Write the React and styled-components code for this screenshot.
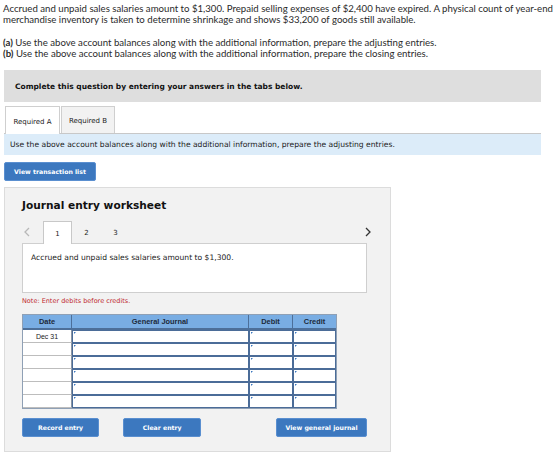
import React from "react";
import styled, { createGlobalStyle } from "styled-components";

const Global = createGlobalStyle`
  html, body { margin: 0; padding: 0; background: #fff; }
  body { font-family: "Lato", "Liberation Sans", sans-serif; color: #222; }
  * { box-sizing: border-box; }
`;

const Page = styled.div`
  width: 541px;
  padding: 3px 0 0 4px;
`;

const Intro = styled.p`
  margin: 0 0 12px -1px;
  width: 560px;
  font-family: "Lato", "Liberation Sans", sans-serif;
  font-size: 9.65px;
  line-height: 11px;
  color: #2a2a2a;
`;

const Parts = styled.div`
  font-family: "Lato", "Liberation Sans", sans-serif;
  font-size: 9.65px;
  line-height: 10.6px;
  margin-left: -1px;
  margin-bottom: 12px;
  color: #2a2a2a;
  & b { font-weight: 700; }
`;

const Banner = styled.div`
  height: 32px;
  background: #dedede;
  display: flex;
  align-items: center;
  padding-left: 11px;
  font-family: "DejaVu Sans", Verdana, sans-serif;
  font-weight: 700;
  font-size: 7.5px;
  color: #111;
  margin-bottom: 4px;
`;

const TabRow = styled.div`
  display: flex;
  height: 28px;
  padding-left: 1px;
  border-bottom: 1px solid #c8c8c8;
`;

const Tab = styled.div`
  width: ${(p) => p.$w}px;
  display: flex;
  align-items: center;
  justify-content: center;
  border: 1px solid #cfcfcf;
  border-bottom: none;
  margin-right: 1px;
  background: ${(p) => (p.$active ? "#fff" : "#f2f2f2")};
  margin-bottom: ${(p) => (p.$active ? "-1px" : "0")};
  padding-top: 2px;
  font-family: "DejaVu Sans", Verdana, sans-serif;
  font-size: 7px;
  color: #222;
`;

const Info = styled.div`
  height: 21px;
  background: #dcecf9;
  display: flex;
  align-items: center;
  padding-left: 6px;
  font-family: "DejaVu Sans", Verdana, sans-serif;
  font-size: 7.6px;
  color: #222;
  margin-bottom: 7px;
`;

const Button = styled.button`
  display: flex;
  align-items: center;
  justify-content: center;
  width: ${(p) => p.$w}px;
  height: 19px;
  padding: 0;
  background: #3c78bf;
  border: 1px solid #5a8fd0;
  border-radius: 2px;
  color: #fff;
  font-family: "DejaVu Sans", Verdana, sans-serif;
  font-weight: 700;
  font-size: 6.2px;
  margin-left: ${(p) => p.$ml || 0}px;
`;

const Panel = styled.div`
  margin-top: 6px;
  width: 387px;
  height: 265px;
  background: #f2f2f2;
  border: 1px solid #dcdcdc;
  padding: 9px 23px 0 17px;
  display: flex;
  flex-direction: column;
`;

const Heading = styled.h2`
  margin: 0;
  font-family: "DejaVu Sans", Verdana, sans-serif;
  font-weight: 700;
  font-size: 10.6px;
  line-height: 16px;
  color: #111;
`;

const Nav = styled.div`
  display: flex;
  align-items: flex-end;
  height: 23px;
  margin-top: 7px;
`;

const Arrow = styled.div`
  width: 21px;
  height: 23px;
  display: flex;
  align-items: center;
  justify-content: ${(p) => (p.$right ? "flex-end" : "flex-start")};
  padding: 1px 0 0 ${(p) => (p.$right ? 0 : 2)}px;
  color: ${(p) => (p.$off ? "#b8b8b8" : "#333")};
  margin-left: ${(p) => (p.$right ? "auto" : "0")};
  margin-right: ${(p) => (p.$right ? "-4px" : "0")};
`;

const StepTab = styled.div`
  width: 29px;
  height: 23px;
  display: flex;
  align-items: center;
  justify-content: center;
  padding-top: 2px;
  font-family: "DejaVu Sans", Verdana, sans-serif;
  font-size: 7px;
  color: #222;
  background: ${(p) => (p.$active ? "#fff" : "transparent")};
  border: 1px solid ${(p) => (p.$active ? "#c8c8c8" : "transparent")};
  border-bottom: none;
  margin-bottom: ${(p) => (p.$active ? "-1px" : "0")};
  position: relative;
  z-index: 1;
`;

const Desc = styled.div`
  height: 50px;
  background: #fff;
  border: 1px solid #cfcfcf;
  padding: 9px 0 0 8px;
  font-family: "DejaVu Sans", Verdana, sans-serif;
  font-size: 7.6px;
  color: #222;
`;

const Note = styled.div`
  margin-top: 3px;
  font-family: "DejaVu Sans", Verdana, sans-serif;
  font-size: 6.5px;
  color: #c0282d;
  line-height: 10px;
`;

const Table = styled.div`
  margin-top: 8px;
  width: 315px;
  display: grid;
  grid-template-columns: 49px 177px 44px 43px;
  grid-template-rows: 15px;
  grid-auto-rows: 13px;
  border: 1px solid #8fa0b5;
`;

const Head = styled.div`
  background: #79ade3;
  border-right: 1px solid #4d6f99;
  border-bottom: 2px solid #4d6f99;
  display: flex;
  align-items: center;
  justify-content: center;
  font-family: "Liberation Sans", Arial, sans-serif;
  font-weight: 700;
  font-size: 7.4px;
  color: #1d2a3a;
  &:nth-child(4) { border-right: none; }
`;

const DateCell = styled.div`
  background: #fff;
  border-bottom: 1px solid #bdbdbd;
  border-right: 1px solid #8a96a5;
  display: flex;
  align-items: center;
  justify-content: center;
  font-family: "Liberation Sans", Arial, sans-serif;
  font-size: 7px;
  color: #222;
`;

const InputCell = styled.div`
  position: relative;
  background: #fff;
  border: 1px solid #4b6c98;
  &::before {
    content: "";
    position: absolute;
    left: 1px;
    top: 1px;
    border-left: 2px solid #3c78bf;
    border-bottom: 2px solid transparent;
    height: 0;
  }
`;

const Actions = styled.div`
  display: flex;
  margin-top: 9px;
`;

const rows = ["Dec 31", "", "", "", "", ""];

const Chevron = ({ dir }) => (
  <svg width="6" height="10" viewBox="0 0 6 10" fill="none" stroke="currentColor" strokeWidth="1.3">
    {dir === "left" ? <polyline points="5,1 1,5 5,9" /> : <polyline points="1,1 5,5 1,9" />}
  </svg>
);

export default function App() {
  return (
    <Page>
      <Global />
      <Intro>
        Accrued and unpaid sales salaries amount to $1,300. Prepaid selling expenses of $2,400 have expired. A physical count of year-end
        <br />
        merchandise inventory is taken to determine shrinkage and shows $33,200 of goods still available.
      </Intro>
      <Parts>
        <div><b>(a)</b> Use the above account balances along with the additional information, prepare the adjusting entries.</div>
        <div><b>(b)</b> Use the above account balances along with the additional information, prepare the closing entries.</div>
      </Parts>
      <Banner>Complete this question by entering your answers in the tabs below.</Banner>
      <TabRow>
        <Tab $active $w={55}>Required A</Tab>
        <Tab $w={54}>Required B</Tab>
      </TabRow>
      <Info>Use the above account balances along with the additional information, prepare the adjusting entries.</Info>
      <Button $w={92}>View transaction list</Button>
      <Panel>
        <Heading>Journal entry worksheet</Heading>
        <Nav>
          <Arrow $off><Chevron dir="left" /></Arrow>
          <StepTab $active>1</StepTab>
          <StepTab>2</StepTab>
          <StepTab>3</StepTab>
          <Arrow $right><Chevron dir="right" /></Arrow>
        </Nav>
        <Desc>Accrued and unpaid sales salaries amount to $1,300.</Desc>
        <Note>Note: Enter debits before credits.</Note>
        <Table>
          <Head>Date</Head>
          <Head>General Journal</Head>
          <Head>Debit</Head>
          <Head>Credit</Head>
          {rows.map((d, i) => (
            <React.Fragment key={i}>
              <DateCell>{d}</DateCell>
              <InputCell />
              <InputCell />
              <InputCell />
            </React.Fragment>
          ))}
        </Table>
        <Actions>
          <Button $w={79}>Record entry</Button>
          <Button $w={80} $ml={24}>Clear entry</Button>
          <Button $w={93} $ml={75}>View general journal</Button>
        </Actions>
      </Panel>
    </Page>
  );
}
